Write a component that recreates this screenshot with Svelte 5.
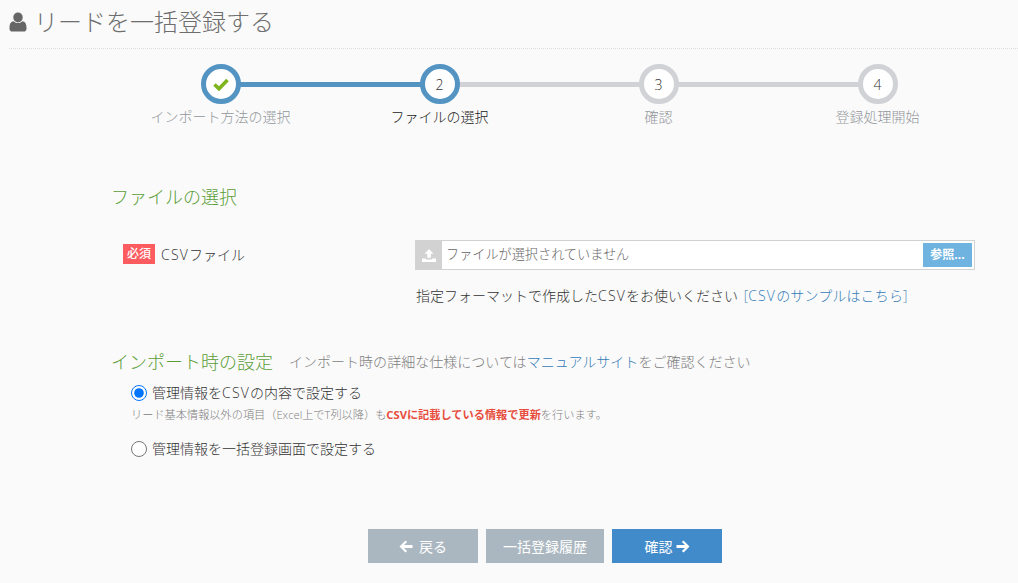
<script>
  const steps = [
    { label: 'インポート方法の選択', state: 'done' },
    { label: 'ファイルの選択', state: 'current' },
    { label: '確認', state: 'todo' },
    { label: '登録処理開始', state: 'todo' }
  ];
</script>

<div class="page">
  <header class="head">
    <svg class="user" viewBox="0 0 18 20" width="18" height="20"><path d="M9 0.5a4.7 4.7 0 0 1 4.7 5 4.7 5 0 0 1-9.4 0A4.7 4.7 0 0 1 9 .5zM4.600 9.200C6 10.600 7.400 11 9 11s3-.4 4.400-1.800c2.600.3 4.100 2.500 4.100 6.300v1.400c0 1.500-1.200 2.600-2.700 2.600H3.200C1.700 19.500.5 18.400.5 16.900v-1.400c0-3.800 1.500-6 4.100-6.300z" fill="#666"/></svg>
    <h1>リードを一括登録する</h1>
  </header>

  <ol class="steps">
    {#each steps as s, i}
      <li class="step {s.state}" class:last={i === steps.length - 1} class:lineblue={i === 0}>
        <span class="circle">
          {#if s.state === 'done'}
            <svg viewBox="0 0 16 13" width="16" height="13"><path d="M1.500 6.500l4.500 4.300L14.500 2" fill="none" stroke="#7fb51c" stroke-width="3.600"/></svg>
          {:else}
            {i + 1}
          {/if}
        </span>
        <span class="label">{s.label}</span>
      </li>
    {/each}
  </ol>

  <main class="body">
    <h2 class="sec1">ファイルの選択</h2>
    <div class="filerow">
      <div class="fieldname">
        <span class="req">必須</span>
        <span><span class="csv">CSV</span>ファイル</span>
      </div>
      <div class="filecol">
        <div class="file">
          <span class="fileicon">
            <svg viewBox="0 0 14 13" width="14" height="13"><path d="M7 0l4.500 4.800H8.800v4H5.200v-4H2.500zM0 9.500h3.800v1h6.400v-1H14V13H0z" fill="#fff"/></svg>
          </span>
          <span class="placeholder">ファイルが選択されていません</span>
          <span class="browse">参照...</span>
        </div>
        <p class="hint">指定フォーマットで作成した<span class="csv">CSV</span>をお使いください <span class="bracket">[<span class="link"><span class="csv">CSV</span>のサンプルはこちら</span>]</span></p>
      </div>
    </div>

    <div class="sec2row">
      <h2>インポート時の設定</h2>
      <span class="sec2note">インポート時の詳細な仕様については<span class="link2">マニュアルサイト</span>をご確認ください</span>
    </div>

    <div class="radios">
      <label class="radio"><input type="radio" name="mode" checked /><span>管理情報を<span class="csv">CSV</span>の内容で設定する</span></label>
      <p class="note">リード基本情報以外の項目（Excel上でT列以降）も<strong>CSVに記載している情報で更新</strong>を行います。</p>
      <label class="radio second"><input type="radio" name="mode" /><span>管理情報を一括登録画面で設定する</span></label>
    </div>

    <div class="actions">
      <button class="btn back">
        <svg viewBox="0 0 14 13" width="14" height="13"><path d="M6.500.5l1.600 1.600L5 5h8.500v3H5l3.100 2.900-1.600 1.600L.5 6.500z" fill="#fff"/></svg>
        <span>戻る</span>
      </button>
      <button class="btn hist">一括登録履歴</button>
      <button class="btn next">
        <span>確認</span>
        <svg viewBox="0 0 14 13" width="14" height="13"><path d="M7.500.5L5.900 2.100 9 5H.5v3H9l-3.100 2.900 1.600 1.600 6-6z" fill="#fff"/></svg>
      </button>
    </div>
  </main>
</div>

<style>
  :global(body) {
    margin: 0;
    background: #fafafa;
    font-family: "Open Sans", "Noto Sans CJK JP", sans-serif;
    color: #555;
  }
  .page {
    width: 1018px;
    height: 583px;
    overflow: hidden;
    box-sizing: border-box;
    padding-left: 9px;
  }
  .head {
    display: flex;
    align-items: center;
    gap: 7px;
    height: 49px;
    box-sizing: border-box;
    border-bottom: 1px dotted #ddd;
    padding-bottom: 4px;
  }
  h1 {
    margin: 0;
    font-size: 24px;
    font-weight: 300;
    color: #6e6e6e;
    line-height: 30px;
  }
  .user { flex: none; }
  .steps {
    list-style: none;
    margin: 15px 0 0 102px;
    padding: 0;
    display: grid;
    grid-template-columns: repeat(4, 219px);
  }
  .step {
    position: relative;
    display: flex;
    flex-direction: column;
    align-items: center;
  }
  .step::after {
    content: "";
    position: absolute;
    top: 18px;
    left: 50%;
    width: 100%;
    height: 5px;
    background: #d0d2d6;
  }
  .step.lineblue::after { background: #5394c3; }
  .step.last::after { display: none; }
  .circle {
    position: relative;
    z-index: 1;
    width: 40px;
    height: 40px;
    box-sizing: border-box;
    border: 5px solid #d0d2d6;
    border-radius: 50%;
    background: #fff;
    display: flex;
    align-items: center;
    justify-content: center;
    font-size: 14px;
    font-weight: 300;
    color: #333;
  }
  .done .circle, .current .circle { border-color: #5394c3; }
  .label {
    margin-top: 3px;
    font-size: 14px;
    font-weight: 300;
    line-height: 20px;
    color: #92969a;
  }
  .current .label { color: #222; }
  .body { padding-left: 102px; }
  h2 {
    margin: 0;
    font-size: 18px;
    font-weight: 300;
    color: #5a9e38;
  }
  .sec1 { margin-top: 58px; line-height: 24px; }
  .filerow {
    display: flex;
    margin-top: 31px;
  }
  .fieldname {
    width: 304px;
    padding: 4px 0 0 12px;
    box-sizing: border-box;
    display: flex;
    align-items: center;
    align-self: flex-start;
    gap: 6px;
    font-size: 14px;
    font-weight: 300;
    color: #333;
    height: 20px;
    margin-top: 2px;
  }
  .csv { letter-spacing: 1.2px; }
  .req {
    width: 32px;
    height: 20px;
    background: #fc5c5f;
    color: #fff;
    font-size: 12px;
    font-weight: 500;
    line-height: 20px;
    text-align: center;
  }
  .filecol { width: 560px; }
  .file {
    display: flex;
    align-items: stretch;
    height: 30px;
    box-sizing: border-box;
    border: 1px solid #d2d2d2;
    background: #fff;
  }
  .fileicon {
    width: 26px;
    background: #d2d2d2;
    display: flex;
    align-items: center;
    justify-content: center;
  }
  .placeholder {
    flex: 1;
    padding-left: 4px;
    font-size: 13.15px;
    font-weight: 300;
    line-height: 26px;
    color: #666;
  }
  .browse {
    width: 49px;
    height: 24px;
    margin: 2px 2px 0 0;
    background: #6fb3e0;
    color: #fff;
    font-size: 12px;
    font-weight: 700;
    line-height: 23px;
    text-align: center;
  }
  .hint {
    margin: 16px 0 0 1px;
    font-size: 14px;
    font-weight: 300;
    line-height: 20px;
    color: #333;
  }
  .bracket { color: #5b8db5; margin-left: 2px; }
  .link { color: #337ab7; letter-spacing: .15px; }
  .sec2row {
    display: flex;
    align-items: center;
    gap: 16px;
    margin-top: 43px;
    height: 24px;
  }
  .sec2note { font-size: 14px; font-weight: 300; color: #808080; letter-spacing: .02px; }
  .link2 { color: #337ab7; }
  .radios { padding-left: 20px; margin-top: 10px; }
  .radio {
    display: flex;
    align-items: center;
    gap: 5px;
    font-size: 14px;
    font-weight: 300;
    line-height: 20px;
    color: #333;
  }
  .radio input {
    margin: 0;
    width: 16px;
    height: 16px;
    accent-color: #0075ff;
  }
  .note {
    margin: 4px 0 0;
    font-size: 11.2px;
    font-weight: 300;
    line-height: 16px;
    color: #808080;
  }
  .note strong { color: #e74c3c; font-weight: 700; }
  .second { margin-top: 16px; }
  .actions {
    display: flex;
    gap: 8px;
    margin: 70px 0 0 257px;
  }
  .btn {
    height: 34px;
    border: 0;
    padding: 0;
    color: #fff;
    font: inherit;
    font-size: 14px;
    display: flex;
    align-items: center;
    justify-content: center;
    gap: 6px;
  }
  .back { width: 110px; background: #abb7c0; }
  .hist { width: 118px; background: #abb7c0; }
  .next { width: 110px; background: #428bca; gap: 3px; }
</style>
